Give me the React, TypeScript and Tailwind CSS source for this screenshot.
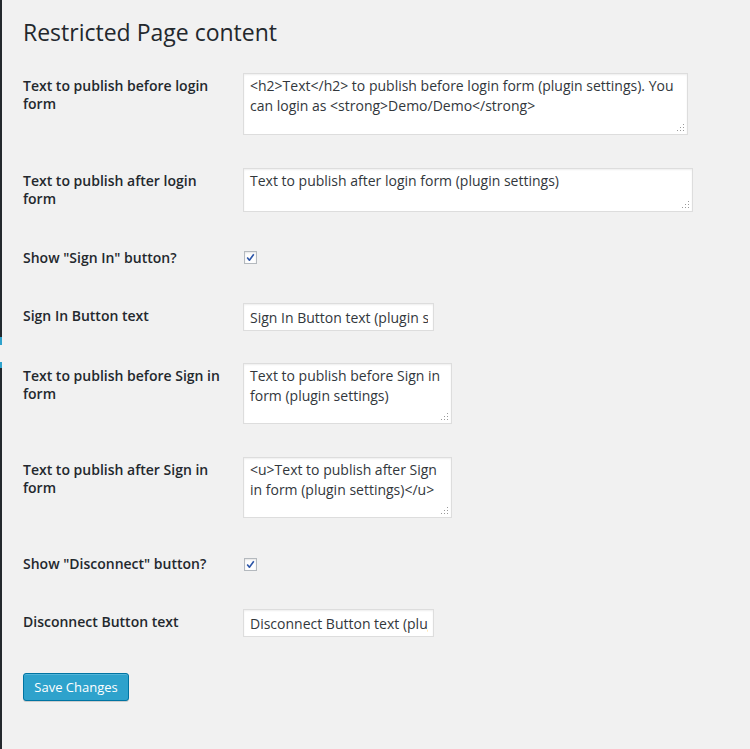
import React from "react";

const Grip = () => (
  <svg
    className="absolute right-[3px] bottom-[3px] pointer-events-none"
    width="9"
    height="9"
    viewBox="0 0 9 9"
  >
    <rect x="7" y="1" width="1" height="1" fill="#9a9a9a" />
    <rect x="4" y="4" width="1" height="1" fill="#9a9a9a" />
    <rect x="7" y="4" width="1" height="1" fill="#9a9a9a" />
    <rect x="1" y="7" width="1" height="1" fill="#9a9a9a" />
    <rect x="4" y="7" width="1" height="1" fill="#9a9a9a" />
    <rect x="7" y="7" width="1" height="1" fill="#9a9a9a" />
  </svg>
);

function TextArea({ value, w, h }: { value: string; w: string; h: string }) {
  return (
    <div className={`relative shrink-0 ${w} ${h}`}>
      <textarea
        readOnly
        defaultValue={value}
        className="block w-full h-full resize-none overflow-hidden border border-[#dddddd] bg-white shadow-[inset_0_1px_2px_rgba(0,0,0,0.07)] px-[6px] pt-[2px] text-[14px] leading-[19.6px] text-[#32373c] outline-none"
      />
      <Grip />
    </div>
  );
}

function TextInput({ value }: { value: string }) {
  return (
    <input
      readOnly
      type="text"
      defaultValue={value}
      className="block shrink-0 w-[191px] h-[28px] border border-[#dddddd] bg-white shadow-[inset_0_1px_2px_rgba(0,0,0,0.07)] pl-[6px] pr-[5px] text-[14px] leading-[19px] text-[#32373c] outline-none"
    />
  );
}

function Checkbox({ mt }: { mt: string }) {
  return (
    <div
      className={`shrink-0 ${mt} ml-[1px] w-[13px] h-[13px] border border-[#b4b9be] bg-[#fefefe] shadow-[inset_0_1px_2px_rgba(0,0,0,0.1)] flex items-center justify-center`}
    >
      <svg width="9" height="9" viewBox="0 0 9 9">
        <path
          d="M1.2 4.6 L3.4 7.2 L7.8 1.2"
          fill="none"
          stroke="#2c55a8"
          strokeWidth="1.6"
          strokeLinejoin="round"
        />
      </svg>
    </div>
  );
}

function Label({ children }: { children: React.ReactNode }) {
  return (
    <div className="shrink-0 w-[200px] mr-[20px] pt-[4px] text-[14px] leading-[18px] font-semibold text-[#23282d]">
      {children}
    </div>
  );
}

export default function App() {
  return (
    <div className="flex min-h-[749px] bg-[#f1f1f1] font-['Open_Sans',sans-serif]">
      <div className="flex flex-col w-[2px] shrink-0">
        <div className="h-[337px] bg-[#23282d]" />
        <div className="h-[8px] bg-[#2ea2cc]" />
        <div className="h-[17px] bg-[#f1f1f1]" />
        <div className="h-[6px] bg-[#2ea2cc]" />
        <div className="flex-1 bg-[#23282d]" />
      </div>
      <div className="flex flex-col pl-[21px]">
        <h2 className="mt-[18px] text-[23px] leading-[29px] font-normal text-[#23282d]">
          Restricted Page content
        </h2>

        <div className="flex items-start mt-[26px]">
          <Label>Text to publish before login form</Label>
          <TextArea
            w="w-[445px]"
            h="h-[62px]"
            value="<h2>Text</h2> to publish before login form (plugin settings). You can login as <strong>Demo/Demo</strong>"
          />
        </div>

        <div className="flex items-start mt-[33px]">
          <Label>Text to publish after login form</Label>
          <TextArea
            w="w-[450px]"
            h="h-[44px]"
            value="Text to publish after login form (plugin settings)"
          />
        </div>

        <div className="flex items-start mt-[33px]">
          <Label>Show "Sign In" button?</Label>
          <Checkbox mt="mt-[6px]" />
        </div>

        <div className="flex items-start mt-[36px]">
          <Label>Sign In Button text</Label>
          <TextInput value="Sign In Button text (plugin settings)" />
        </div>

        <div className="flex items-start mt-[32px]">
          <Label>Text to publish before Sign in form</Label>
          <TextArea
            w="w-[209px]"
            h="h-[61px]"
            value="Text to publish before Sign in form (plugin settings)"
          />
        </div>

        <div className="flex items-start mt-[33px]">
          <Label>Text to publish after Sign in form</Label>
          <TextArea
            w="w-[209px]"
            h="h-[61px]"
            value="<u>Text to publish after Sign in form (plugin settings)</u>"
          />
        </div>

        <div className="flex items-start mt-[33px]">
          <Label>Show "Disconnect" button?</Label>
          <Checkbox mt="mt-[7px]" />
        </div>

        <div className="flex items-start mt-[36px]">
          <Label>Disconnect Button text</Label>
          <TextInput value="Disconnect Button text (plugin settings)" />
        </div>

        <div className="mt-[36px]">
          <button
            type="button"
            className="h-[28px] w-[106px] rounded-[3px] border border-[#0074a2] bg-[#2ea2cc] text-[13px] leading-[26px] text-white shadow-[inset_0_1px_0_rgba(120,200,230,0.5),0_1px_0_rgba(0,0,0,0.15)]"
          >
            Save Changes
          </button>
        </div>
      </div>
    </div>
  );
}
